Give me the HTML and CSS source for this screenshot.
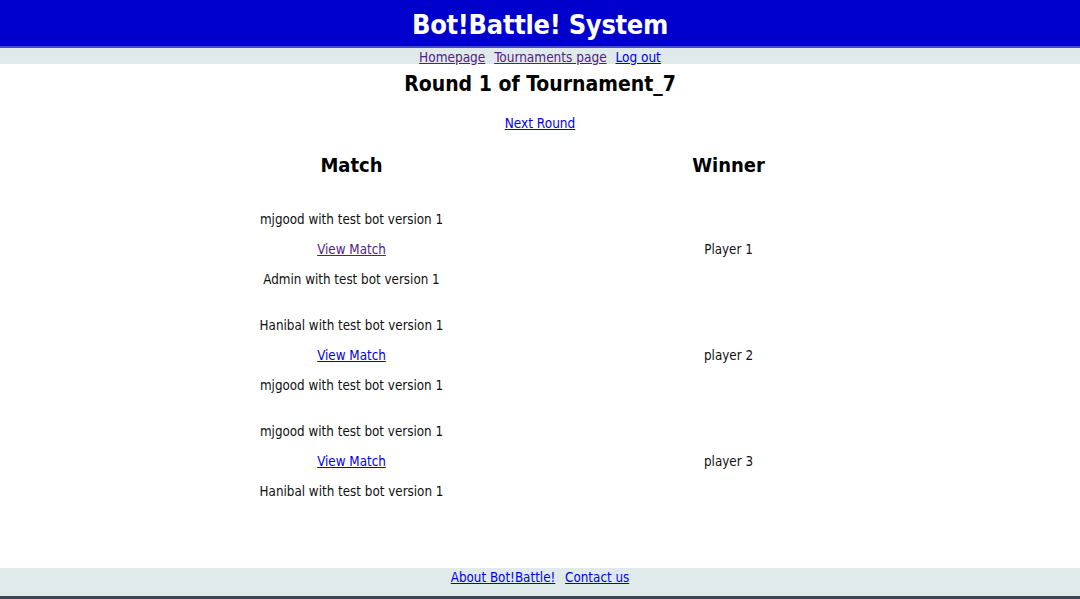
FILE: index.html
```html
<!DOCTYPE html>
<html>
<head>
<meta charset="utf-8">
<title>Bot!Battle! System</title>
<link rel="stylesheet" href="styles.css">
</head>
<body>
<div class="page">
  <header class="top">
    <h1 class="brand">Bot!Battle! System</h1>
  </header>
  <nav class="nav">
    <a class="visited" href="#">Homepage</a>
    <a class="visited" href="#">Tournaments page</a>
    <a href="#">Log out</a>
  </nav>
  <main class="main">
    <h2 class="title">Round 1 of Tournament_7</h2>
    <p class="next"><a href="#">Next Round</a></p>
    <table class="rounds">
      <tr>
        <th>Match</th>
        <th>Winner</th>
      </tr>
      <tr>
        <td>
          <p>mjgood with test bot version 1</p>
          <p><a class="visited" href="#">View Match</a></p>
          <p>Admin with test bot version 1</p>
        </td>
        <td>Player 1</td>
      </tr>
      <tr>
        <td>
          <p>Hanibal with test bot version 1</p>
          <p><a href="#">View Match</a></p>
          <p>mjgood with test bot version 1</p>
        </td>
        <td>player 2</td>
      </tr>
      <tr>
        <td>
          <p>mjgood with test bot version 1</p>
          <p><a href="#">View Match</a></p>
          <p>Hanibal with test bot version 1</p>
        </td>
        <td>player 3</td>
      </tr>
    </table>
  </main>
  <footer class="foot">
    <a href="#">About Bot!Battle!</a>
    <a href="#">Contact us</a>
  </footer>
  <div class="edge"></div>
</div>
</body>
</html>
```
FILE: styles.css
```css
html, body {
  margin: 0;
  padding: 0;
}
body {
  font-family: "DejaVu Sans Condensed", "DejaVu Sans", sans-serif;
  font-size: 13.3px;
  color: #111;
  background: #fff;
}
.page {
  min-height: 599px;
  display: flex;
  flex-direction: column;
}
a {
  color: #0000ee;
}
a.visited {
  color: #551a8b;
}
.top {
  background: #0000cc;
  height: 48px;
  border-bottom: 2px solid #4848d8;
  display: flex;
  align-items: center;
  justify-content: center;
  box-sizing: border-box;
  padding-top: 2px;
}
.brand {
  margin: 0;
  color: #fff;
  font-size: 27px;
  font-weight: bold;
  line-height: 1;
  letter-spacing: -0.3px;
}
.nav {
  background: #e0eaea;
  height: 15px;
  padding-top: 1px;
  line-height: 16px;
  font-size: 13.5px;
  text-align: center;
}
.nav a {
  margin: 0 2.5px;
}
.main {
  text-align: center;
}
.title {
  margin: 7px 0 0;
  font-size: 21px;
  line-height: 26px;
  color: #000;
}
.next {
  margin: 18px 0 0;
  font-size: 13.5px;
  line-height: 17px;
}
.rounds {
  width: 70%;
  margin: 19px auto 0;
  border-collapse: separate;
  border-spacing: 2px 1px;
}
.rounds th {
  width: 50%;
  font-size: 20px;
  line-height: 24px;
  padding: 1px 1px 19px;
  color: #000;
}
.rounds td {
  padding: 1px;
  text-align: center;
  vertical-align: middle;
}
.rounds p {
  margin: 13px 0;
  line-height: 17px;
}
.foot {
  margin-top: auto;
  background: #e0eaea;
  height: 28px;
  line-height: 20px;
  font-size: 13.3px;
  text-align: center;
}
.foot a {
  margin: 0 3px;
}
.edge {
  height: 3px;
  background: #3c4456;
}
```
